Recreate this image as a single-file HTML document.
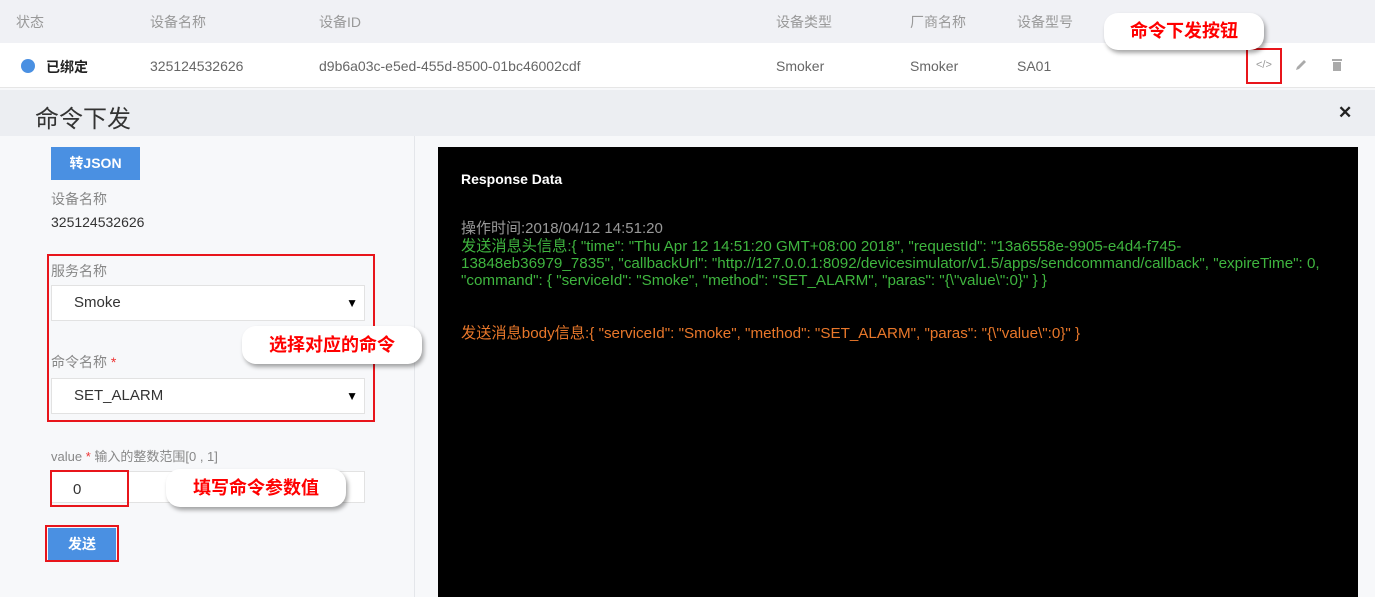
<!DOCTYPE html>
<html><head><meta charset="utf-8"><style>
*{margin:0;padding:0;box-sizing:border-box}
body{width:1375px;height:597px;overflow:hidden;background:#f7f8fa;font-family:"Liberation Sans","Noto Sans CJK SC",sans-serif;position:relative;font-size:14px;color:#666}
.abs{position:absolute;white-space:nowrap}
.hdr{position:absolute;left:0;top:0;width:1375px;height:43px;background:#f0f1f5}
.row{position:absolute;left:0;top:43px;width:1375px;height:45px;background:#fff;border-bottom:1px solid #e6e6e6}
.mh{position:absolute;left:0;top:90px;width:1375px;height:46px;background:#eceef2}
.left{position:absolute;left:4px;top:136px;width:411px;height:461px;background:#f7f8fa;border-right:1px solid #e4e6ea}
.black{position:absolute;left:438px;top:147px;width:920px;height:450px;background:#000}
.rb{position:absolute;border:2px solid #e8151b}
.bubble{position:absolute;background:#fff;border-radius:14px;box-shadow:2px 3px 4px rgba(0,0,0,.35);color:#f00;font-weight:bold;font-size:18px;text-align:center}
.sel{position:absolute;left:51px;width:314px;height:36px;background:#fff;border:1px solid #e2e2e2;color:#333;font-size:15px;padding-left:22px;line-height:34px}
.sel span{position:absolute;right:6px;top:0;font-size:12px;color:#000}
.btn{position:absolute;background:#4a90e2;color:#fff;font-weight:bold;font-size:14px;text-align:center}
.g{color:#3fb53f}.o{color:#e8772a}
</style></head><body>
<div class="hdr"></div>
<div class="abs" style="left:16px;top:12px;color:#999">状态</div>
<div class="abs" style="left:150px;top:12px;color:#999">设备名称</div>
<div class="abs" style="left:319px;top:12px;color:#999">设备ID</div>
<div class="abs" style="left:776px;top:12px;color:#999">设备类型</div>
<div class="abs" style="left:910px;top:12px;color:#999">厂商名称</div>
<div class="abs" style="left:1017px;top:12px;color:#999">设备型号</div>
<div class="row"></div>
<div class="abs" style="left:21px;top:59px;width:14px;height:14px;border-radius:50%;background:#4a90e2"></div>
<div class="abs" style="left:46px;top:57px;color:#222;font-weight:bold">已绑定</div>
<div class="abs" style="left:150px;top:58px">325124532626</div>
<div class="abs" style="left:319px;top:58px">d9b6a03c-e5ed-455d-8500-01bc46002cdf</div>
<div class="abs" style="left:776px;top:58px">Smoker</div>
<div class="abs" style="left:910px;top:58px">Smoker</div>
<div class="abs" style="left:1017px;top:58px">SA01</div>
<div class="rb" style="left:1246px;top:48px;width:36px;height:36px"></div>
<div class="abs" style="left:1256px;top:59px;font-size:11px;color:#999">&lt;/&gt;</div>
<svg class="abs" style="left:1294px;top:58px" width="14" height="14"><path d="M2 12 L3 9 L10 2 L12 4 L5 11 Z" fill="#aaa"/></svg>
<svg class="abs" style="left:1331px;top:58px" width="12" height="14"><rect x="1" y="1" width="10" height="2" fill="#aaa"/><rect x="2" y="4" width="8" height="9" fill="#aaa"/></svg>
<div class="bubble" style="left:1104px;top:13px;width:160px;height:37px;line-height:37px">命令下发按钮</div>
<div class="mh"></div>
<div class="abs" style="left:35px;top:99px;font-size:24px;color:#333">命令下发</div>
<div class="abs" style="left:1338px;top:103px;font-size:17px;color:#222;font-weight:bold">✕</div>
<div class="left"></div>
<div class="btn" style="left:51px;top:147px;width:89px;height:33px;line-height:33px">转JSON</div>
<div class="abs" style="left:51px;top:189px;color:#888">设备名称</div>
<div class="abs" style="left:51px;top:214px;color:#333">325124532626</div>
<div class="abs" style="left:51px;top:261px;color:#888">服务名称</div>
<div class="sel" style="top:285px">Smoke<span>▼</span></div>
<div class="abs" style="left:51px;top:352px;color:#888">命令名称 <span style="color:#e33">*</span></div>
<div class="sel" style="top:378px">SET_ALARM<span>▼</span></div>
<div class="rb" style="left:47px;top:254px;width:328px;height:168px"></div>
<div class="bubble" style="left:242px;top:326px;width:180px;height:38px;line-height:38px">选择对应的命令</div>
<div class="abs" style="left:51px;top:446px;color:#888;font-size:13px">value <span style="color:#e33">*</span> 输入的整数范围[0 , 1]</div>
<div class="abs" style="left:51px;top:471px;width:314px;height:32px;background:#fff;border:1px solid #e2e2e2"></div>
<div class="abs" style="left:73px;top:481px;color:#333;font-size:15px">0</div>
<div class="rb" style="left:50px;top:470px;width:79px;height:37px"></div>
<div class="bubble" style="left:166px;top:469px;width:180px;height:38px;line-height:38px">填写命令参数值</div>
<div class="btn" style="left:48px;top:528px;width:68px;height:32px;line-height:32px">发送</div>
<div class="rb" style="left:45px;top:525px;width:74px;height:37px"></div>
<div class="black"></div>
<div class="abs" style="left:461px;top:171px;color:#fff;font-weight:bold">Response Data</div>
<div class="abs" style="left:461px;top:217px;color:#999;font-size:15px">操作时间:2018/04/12 14:51:20</div>
<div class="abs g" style="left:461px;top:238px;line-height:17px;font-size:15.2px">发送消息头信息:{ "time": "Thu Apr 12 14:51:20 GMT+08:00 2018", "requestId": "13a6558e-9905-e4d4-f745-<br>13848eb36979_7835", "callbackUrl": "http://127.0.0.1:8092/devicesimulator/v1.5/apps/sendcommand/callback", "expireTime": 0,<br>"command": { "serviceId": "Smoke", "method": "SET_ALARM", "paras": "{\"value\":0}" } }</div>
<div class="abs o" style="left:461px;top:321px;font-size:15.2px">发送消息body信息:{ "serviceId": "Smoke", "method": "SET_ALARM", "paras": "{\"value\":0}" }</div>
</body></html>
